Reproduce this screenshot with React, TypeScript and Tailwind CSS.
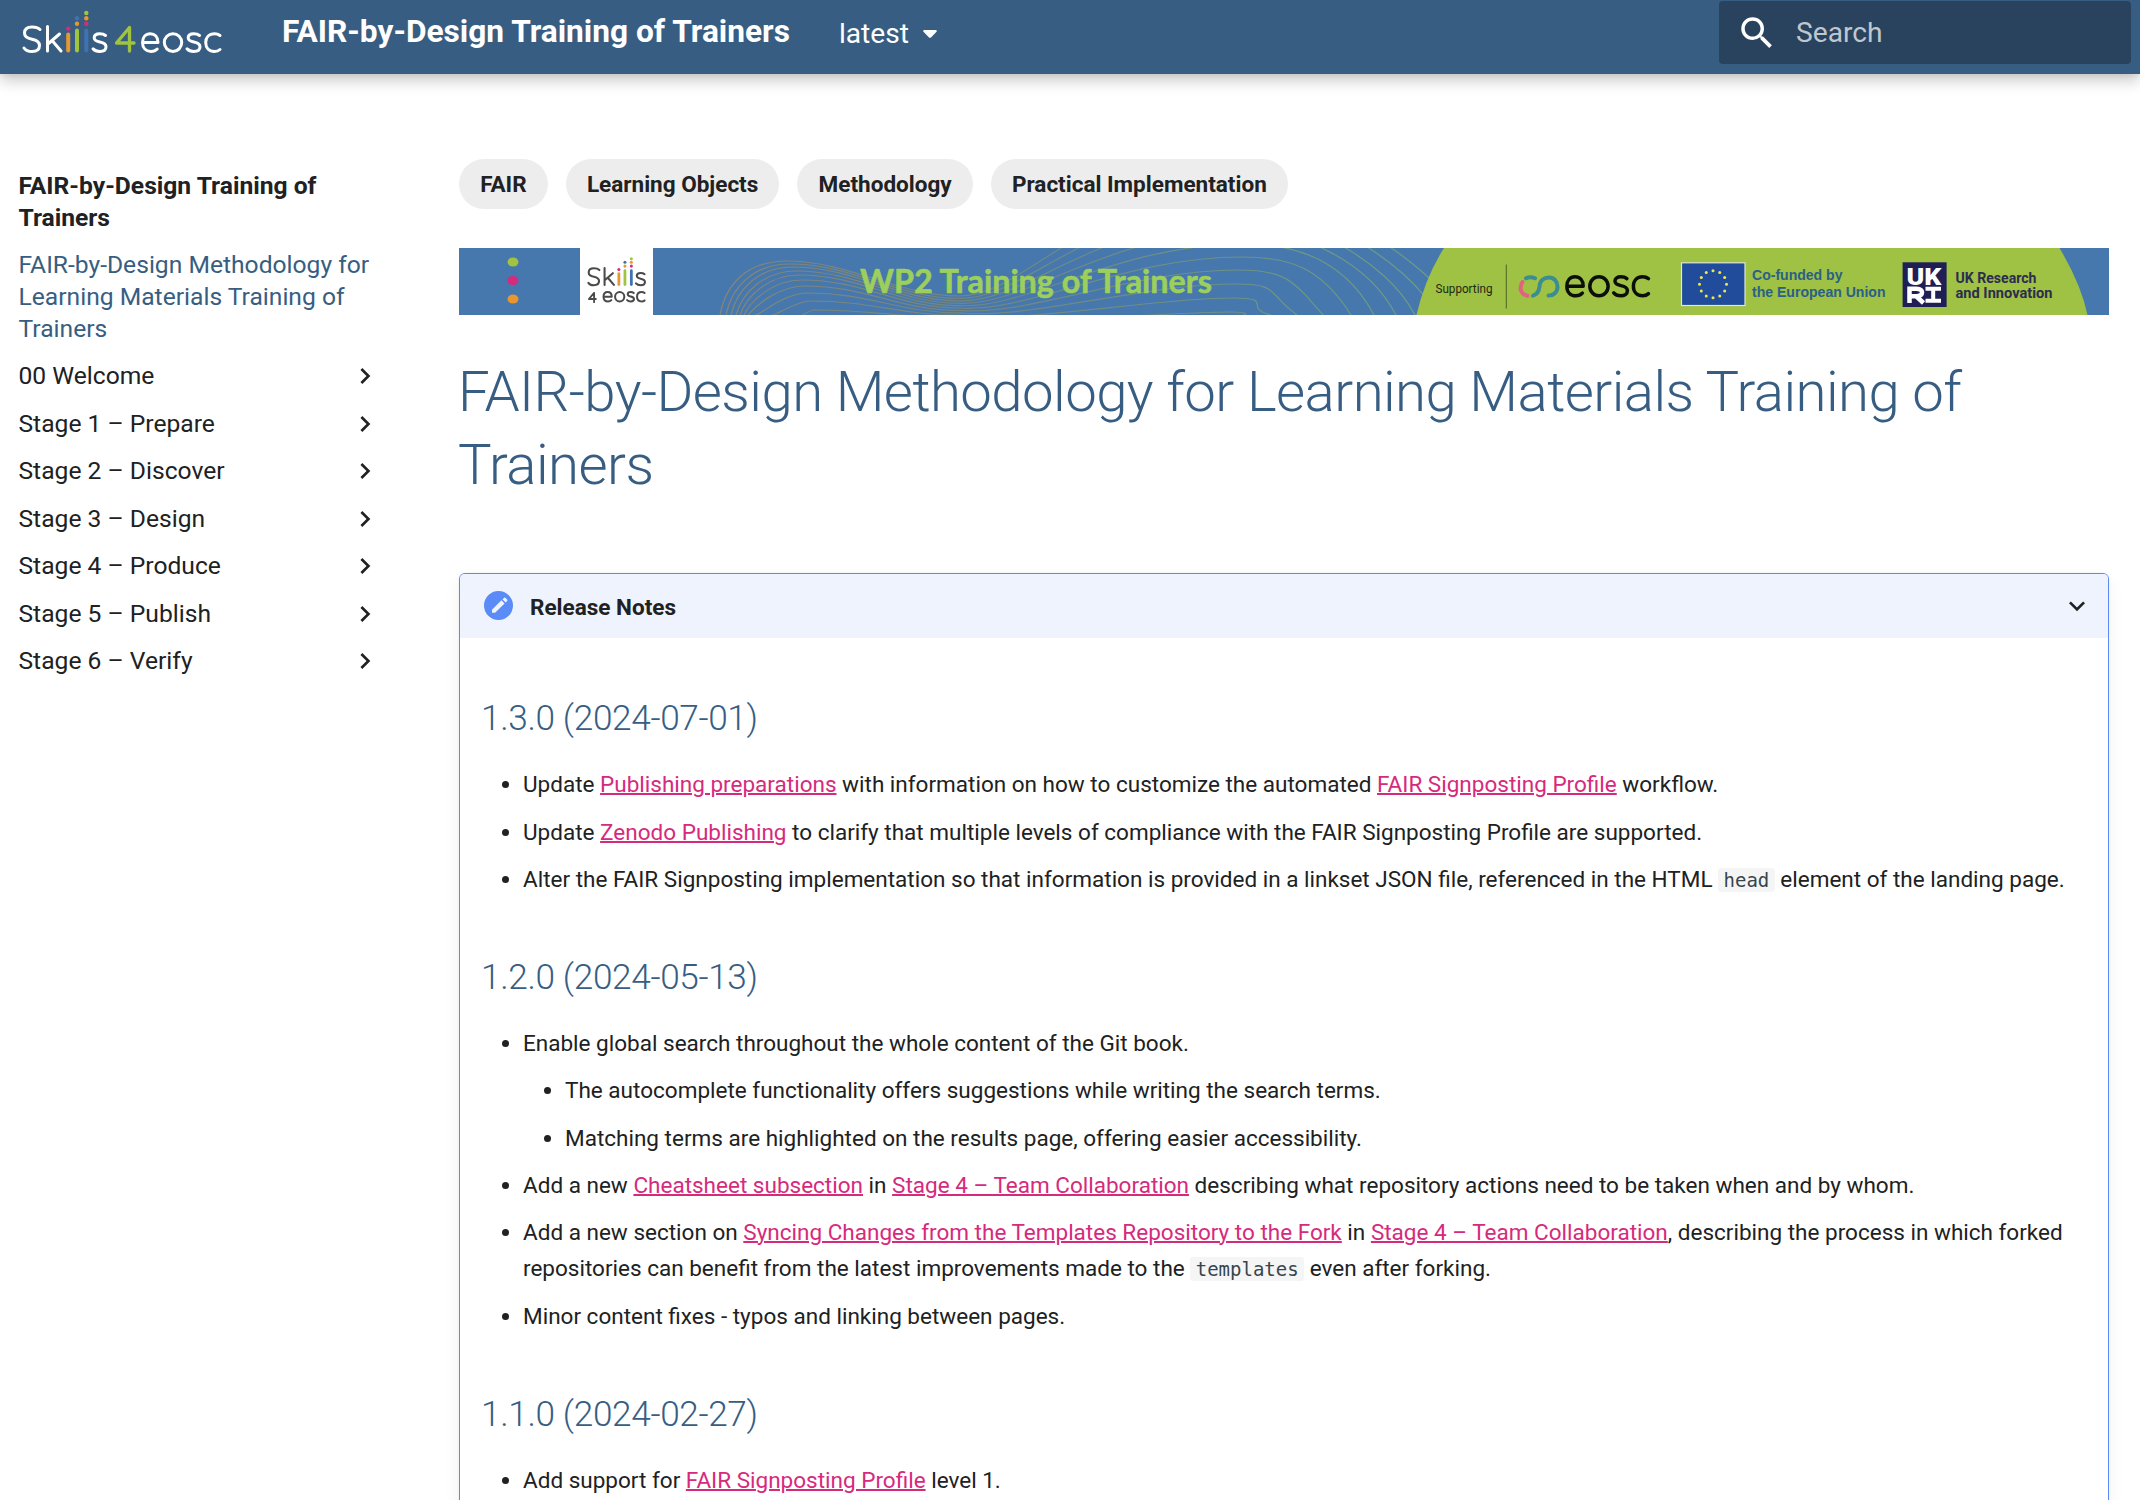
import React from "react";

const stages = [
  "00 Welcome",
  "Stage 1 – Prepare",
  "Stage 2 – Discover",
  "Stage 3 – Design",
  "Stage 4 – Produce",
  "Stage 5 – Publish",
  "Stage 6 – Verify",
];

const tags = ["FAIR", "Learning Objects", "Methodology", "Practical Implementation"];

function SkillsMark({ color }: { color: string }) {
  return (
    <g fill="none" strokeLinecap="round" strokeLinejoin="round">
      <g stroke={color} strokeWidth="3">
        <path d="M40 29.5C38 27.5 35 27 32 27C27 27 24.5 29.5 24.5 33C24.5 37.5 28 38.5 32 39.2C36.500 40 39.500 41.500 39.500 45.500C39.500 49.500 36.500 51.500 32 51.500C28.500 51.500 25.500 50.300 24 48" />
        <path d="M47.500 26.500V51M59.500 34L48.500 43.500M52.500 41L61 51" />
        <path d="M105.500 35.500C104 34.200 102 33.700 99.800 33.700C96.500 33.700 94.200 35.200 94.200 37.700C94.200 40.500 96.500 41.300 99.800 42C103.500 42.700 106 43.700 106 46.800C106 50 103.200 51.500 99.800 51.500C97 51.500 94.500 50.600 93 48.800" />
      </g>
      <g strokeWidth="4">
        <path d="M68.200 34.500V50.500" stroke="#e8962f" />
        <path d="M77 30.500V50.500" stroke="#a0c340" />
        <path d="M86.300 30.500V50.500" stroke="#3f72ae" />
      </g>
      <circle cx="68.200" cy="28.600" r="2.200" fill="#d62a7d" />
      <circle cx="77" cy="23.800" r="2.200" fill="#e8962f" />
      <circle cx="77" cy="18.300" r="2.200" fill="#3f72ae" />
      <circle cx="86.300" cy="23.800" r="2.200" fill="#d62a7d" />
      <circle cx="86.300" cy="18.300" r="2.200" fill="#e8962f" />
      <circle cx="86.300" cy="13" r="2.200" fill="#a0c340" />
    </g>
  );
}

function FourMark({ color, width = 3.3 }: { color: string; width?: number }) {
  return <path d="M129.500 51V27.500L116.500 43H134" fill="none" stroke={color} strokeWidth={width} strokeLinecap="round" strokeLinejoin="round" />;
}

function EoscMark({ color, width = 3 }: { color: string; width?: number }) {
  return (
    <g fill="none" stroke={color} strokeWidth={width} strokeLinecap="round" strokeLinejoin="round">
      <path d="M142.500 42.500H158C158 37 154.800 33.700 150.300 33.700C145.500 33.700 142.500 37.500 142.500 42.500C142.500 48 146 51.500 151 51.500C153.500 51.500 155.700 50.600 157.200 49" />
      <ellipse cx="173" cy="42.600" rx="8.700" ry="8.900" />
      <path d="M199.500 35.500C198 34.200 196 33.700 193.800 33.700C190.500 33.700 188.200 35.200 188.200 37.700C188.200 40.500 190.500 41.300 193.800 42C197.500 42.700 200 43.700 200 46.800C200 50 197.200 51.500 193.800 51.500C191 51.500 188.500 50.600 187 48.800" />
      <path d="M220 35.500C218.500 34.300 216.500 33.700 214.500 33.700C209 33.700 205.700 37.500 205.700 42.600C205.700 47.700 209 51.500 214.500 51.500C216.500 51.500 218.500 50.900 220 49.500" />
    </g>
  );
}

function Header() {
  return (
    <header className="relative flex h-[74px] items-start bg-[#375e82] text-white shadow-[0_0_7px_rgba(0,0,0,0.1),0_7px_14px_rgba(0,0,0,0.2)]">
      <div className="mt-2 ml-5 w-[262px]">
        <svg width="204" height="50" viewBox="20 8 204 50">
          <SkillsMark color="#fff" />
          <FourMark color="#a0c340" />
          <EoscMark color="#fff" />
        </svg>
      </div>
      <div className="mt-[11px] text-[31.680px] leading-[42px] font-bold">FAIR-by-Design Training of Trainers</div>
      <div className="mt-[13px] ml-[49px] flex items-center text-[28.160px] leading-[42px]">
        latest
        <svg className="ml-[14px]" width="14" height="8" viewBox="0 0 14 8" fill="currentColor">
          <path d="M1 0h12q1.300 0.500 0.500 1.700L8 7.400q-1 0.900-2 0L0.500 1.700Q-0.300 0.500 1 0Z" />
        </svg>
      </div>
      <div className="mt-px mr-[9px] ml-auto flex h-[63px] w-[412px] items-center rounded-[4px] bg-[#29435e] pl-[17px]">
        <svg width="42" height="42" viewBox="0 0 24 24" fill="currentColor">
          <path d="M9.500 3A6.500 6.500 0 0 1 16 9.500c0 1.610-.59 3.090-1.560 4.230l.27.270h.79l5 5-1.500 1.500-5-5v-.79l-.27-.27A6.516 6.516 0 0 1 9.500 16 6.500 6.500 0 0 1 3 9.500 6.500 6.500 0 0 1 9.500 3m0 2C7 5 5 7 5 9.500S7 14 9.500 14 14 12 14 9.500 12 5 9.500 5Z" />
        </svg>
        <span className="ml-[18px] pt-[2px] text-[28.160px] text-[#bfc7cf]">Search</span>
      </div>
    </header>
  );
}

function Chevron({ down = false }: { down?: boolean }) {
  return (
    <svg className={down ? "rotate-90" : ""} width="32" height="32" viewBox="0 0 24 24" fill="#202122">
      <path d="M8.590 16.580 13.170 12 8.590 7.410 10 6l6 6-6 6-1.410-1.420Z" />
    </svg>
  );
}

function Sidebar() {
  return (
    <nav className="w-[381px] shrink-0 pl-[18.500px] text-[24.640px] leading-[32px]">
      <div className="mt-[96px] font-bold">
        FAIR-by-Design Training of
        <br />
        Trainers
      </div>
      <div className="mt-[15px] text-[#375e82]">
        FAIR-by-Design Methodology for
        <br />
        Learning Materials Training of
        <br />
        Trainers
      </div>
      <ul>
        {stages.map((s) => (
          <li key={s} className="mt-[15.450px] flex items-center justify-between">
            {s}
            <Chevron />
          </li>
        ))}
      </ul>
    </nav>
  );
}

/* One entry per contour line: start x, left crest y, right crest y, end x. */
const contours = [
  [261, 13, -56, 1000],
  [267, 16, -43, 978],
  [272, 19, -30, 956],
  [277, 23, -17, 937],
  [281, 27, -4, 915],
  [285, 32, 9, 892],
  [289, 38, 22, 864],
  [296, 45, 36, 838],
  [304, 53, 50, 812],
  [319, 62, 64, 780],
];

const stars = Array.from({ length: 12 }, (_, i) => [
  1254 + 13.5 * Math.sin((i * Math.PI) / 6),
  36.3 - 13.5 * Math.cos((i * Math.PI) / 6),
]);

function Banner() {
  return (
    <svg className="block" width="1650" height="67" viewBox="0 0 1650 67">
      <defs>
        <linearGradient id="contour" gradientUnits="userSpaceOnUse" x1="260" y1="0" x2="960" y2="0">
          <stop offset="0" stopColor="#838678" />
          <stop offset="0.4" stopColor="#6f8684" />
          <stop offset="1" stopColor="#6b9c86" />
        </linearGradient>
      </defs>
      <rect width="1650" height="67" fill="#4677ad" />
      <g fill="none" stroke="url(#contour)" strokeWidth="1.200">
        {contours.map(([s, p, q, e], i) => {
          const t = 48 + i * 2.4;
          return (
            <path
              key={s}
              d={`M${s} 67C${s + 6} ${p + 22} ${s + 28} ${p} ${328 + i * 3} ${p}C${390 + i * 3} ${p} 440 ${t} 500 ${t}C570 ${t + i} ${620 + i * 9} ${q} ${798 - i * 3} ${q}C${850 - i * 4} ${q} ${e - 30} ${Math.max(q + 10, 10)} ${e} 67`}
            />
          );
        })}
      </g>
      <ellipse cx="54" cy="14" rx="5.500" ry="4.500" fill="#a0c340" />
      <ellipse cx="54" cy="32.500" rx="5.500" ry="4.500" fill="#d62a7d" />
      <ellipse cx="54" cy="51" rx="5.500" ry="4.500" fill="#e8962f" />
      <rect x="121" width="73" height="67" fill="#fff" />
      <g transform="translate(112.800 1.700) scale(0.690)">
        <SkillsMark color="#4a4a4c" />
      </g>
      <g transform="translate(83.300 33.800) scale(0.400)">
        <FourMark color="#4a4a4c" width={4.6} />
      </g>
      <g transform="translate(69 26.200) scale(0.530)">
        <EoscMark color="#4a4a4c" width={3.8} />
      </g>
      <text
        x="401"
        y="44.500"
        fontFamily="Lato, sans-serif"
        fontWeight="700"
        fontSize="31.500"
        textLength="352"
        lengthAdjust="spacingAndGlyphs"
        fill="#9ccf5c"
        stroke="#9ccf5c"
        strokeWidth="0.600"
      >
        WP2 Training of Trainers
      </text>
      <path d="M957.500 67Q966 30 985 0H1600.500Q1622 36 1628.500 67Z" fill="#9fc144" />
      <text x="976.500" y="44.500" fontFamily="Roboto, sans-serif" fontSize="12.500" textLength="57" lengthAdjust="spacingAndGlyphs" fill="#1d2a12">
        Supporting
      </text>
      <path d="M1047.300 16.500V60.500" stroke="#4d6420" strokeWidth="1" />
      <g fill="none" strokeWidth="4" strokeLinecap="round">
        <path d="M1063.500 34C1059.500 40 1062 46.500 1068.500 47.800" stroke="#e0637f" />
        <path d="M1067 30.200C1070 28.800 1073 28.800 1076 30.200" stroke="#3b8d91" />
        <path d="M1074 47.600C1078 46.500 1080 43 1080.500 38.500C1081 32.500 1085 29.500 1090 29.500C1095 29.500 1098.500 33.500 1098.500 38.800C1098.500 44 1094.500 47.800 1089.500 47.500" stroke="#3b8d91" />
      </g>
      <g transform="translate(957.800 -7.300) scale(1.053 1.070)">
        <EoscMark color="#0c0f08" width={3.3} />
      </g>
      <rect x="1222.500" y="14.800" width="63.500" height="42.700" fill="#204c9b" stroke="#dfe9cf" strokeWidth="1.200" />
      {stars.map(([x, y]) => (
        <circle key={`${x}-${y}`} cx={x} cy={y} r="1.500" fill="#ece94e" />
      ))}
      <g fontFamily="Liberation Sans, sans-serif" fontWeight="700" fontSize="14.500" fill="#29608a">
        <text x="1293" y="31.700" textLength="90.500" lengthAdjust="spacingAndGlyphs">
          Co-funded by
        </text>
        <text x="1293" y="48.700" textLength="133.500" lengthAdjust="spacingAndGlyphs">
          the European Union
        </text>
      </g>
      <rect x="1443.600" y="14.300" width="44" height="44.700" fill="#1f1f55" />
      <text x="1447.500" y="36.500" fontFamily="Roboto, sans-serif" fontWeight="900" fontSize="24" fill="#fff" textLength="35" lengthAdjust="spacingAndGlyphs">
        UK
      </text>
      <g fill="none" stroke="#fff" strokeWidth="4.500">
        <path d="M1450.500 55V40.800H1457.500Q1463 41 1463 44.500Q1463 48 1457.500 48.200H1451M1457 48L1464.500 55" />
        <path d="M1466.500 40.800H1482M1474.200 41V53M1466.500 52.800H1482" strokeWidth="4" />
      </g>
      <g fontFamily="Roboto, sans-serif" fontWeight="700" fontSize="14" fill="#2b2c50">
        <text x="1496.500" y="34.700" textLength="81" lengthAdjust="spacingAndGlyphs">
          UK Research
        </text>
        <text x="1496.500" y="49.700" textLength="97" lengthAdjust="spacingAndGlyphs">
          and Innovation
        </text>
      </g>
    </svg>
  );
}

const A = ({ children }: { children: React.ReactNode }) => (
  <a className="text-[#d62a7d] underline decoration-2">{children}</a>
);
const Code = ({ children }: { children: React.ReactNode }) => (
  <code className="rounded-[3px] bg-[#f5f5f5] px-[5.400px] py-px font-['DejaVu_Sans_Mono',monospace] text-[19px] leading-none text-[#36464e]">{children}</code>
);
const Li = ({ children }: { children: React.ReactNode }) => <li className="mb-[11.264px]">{children}</li>;

function Release({ title, children }: { title: string; children: React.ReactNode }) {
  return (
    <section className="pb-[45.100px]">
      <h2 className="text-[35.200px] leading-[49.280px] font-light tracking-[-0.352px] text-[#375e82]">{title}</h2>
      <ul className="mt-[22.500px] ml-[42px] list-disc">{children}</ul>
    </section>
  );
}

export default function App() {
  return (
    <div className="h-[1500px] overflow-hidden bg-white font-[Roboto,sans-serif] text-[#202122]">
      <Header />
      <div className="flex">
        <Sidebar />
        <main className="ml-[78px] w-[1650px]">
          <div className="mt-[85px] flex gap-[18px]">
            {tags.map((t) => (
              <span key={t} className="h-[50px] rounded-full bg-[#ededed] px-[21.150px] text-[22.528px] leading-[50px] font-bold">
                {t}
              </span>
            ))}
          </div>
          <div className="mt-[39px]">
            <Banner />
          </div>
          <h1 className="mt-[41px] -ml-px text-[56.320px] leading-[73.216px] font-light tracking-[-0.563px] text-[#375e82]">
            FAIR-by-Design Methodology for Learning Materials Training of Trainers
          </h1>
          <div className="mt-[70.600px] h-[1000px] overflow-hidden rounded-[6px] border border-[#5a8bf7] text-[22.528px] leading-[36.045px] shadow-[0_7px_18px_rgba(0,0,0,0.05),0_0_2px_rgba(0,0,0,0.1)]">
            <div className="flex h-[64px] items-center bg-[#eef3fe] pr-[15px] pb-px pl-[24px] font-bold">
              <svg width="29" height="29" viewBox="0 0 24 24" fill="#5a8bf7" className="mr-[17px]">
                <path d="M12 0a12 12 0 0 0-12 12 12 12 0 0 0 12 12 12 12 0 0 0 12-12A12 12 0 0 0 12 0m4.900 5.300q.4 0 .7.300l1.500 1.500q.6.600 0 1.200l-1.200 1.200-2.600-2.600 1.200-1.200q.2-.3.400-.4M14.400 7.700l2.600 2.600-7.800 7.800H6.600v-2.600Z" />
              </svg>
              <span className="pt-[2px]">Release Notes</span>
              <span className="ml-auto">
                <Chevron down />
              </span>
            </div>
            <div className="px-[21px] pt-[56.400px]">
              <Release title="1.3.0 (2024-07-01)">
                <Li>
                  Update <A>Publishing preparations</A> with information on how to customize the automated <A>FAIR Signposting Profile</A> workflow.
                </Li>
                <Li>
                  Update <A>Zenodo Publishing</A> to clarify that multiple levels of compliance with the FAIR Signposting Profile are supported.
                </Li>
                <Li>
                  Alter the FAIR Signposting implementation so that information is provided in a linkset JSON file, referenced in the HTML <Code>head</Code> element of the landing page.
                </Li>
              </Release>
              <Release title="1.2.0 (2024-05-13)">
                <Li>
                  Enable global search throughout the whole content of the Git book.
                  <ul className="mt-[11.264px] ml-[42px] list-disc">
                    <Li>The autocomplete functionality offers suggestions while writing the search terms.</Li>
                    <Li>Matching terms are highlighted on the results page, offering easier accessibility.</Li>
                  </ul>
                </Li>
                <Li>
                  Add a new <A>Cheatsheet subsection</A> in <A>Stage 4 – Team Collaboration</A> describing what repository actions need to be taken when and by whom.
                </Li>
                <Li>
                  Add a new section on <A>Syncing Changes from the Templates Repository to the Fork</A> in <A>Stage 4 – Team Collaboration</A>, describing the process in which forked repositories can benefit from the latest improvements made to the <Code>templates</Code> even after forking.
                </Li>
                <Li>Minor content fixes - typos and linking between pages.</Li>
              </Release>
              <Release title="1.1.0 (2024-02-27)">
                <Li>
                  Add support for <A>FAIR Signposting Profile</A> level 1.
                </Li>
              </Release>
            </div>
          </div>
        </main>
      </div>
    </div>
  );
}
